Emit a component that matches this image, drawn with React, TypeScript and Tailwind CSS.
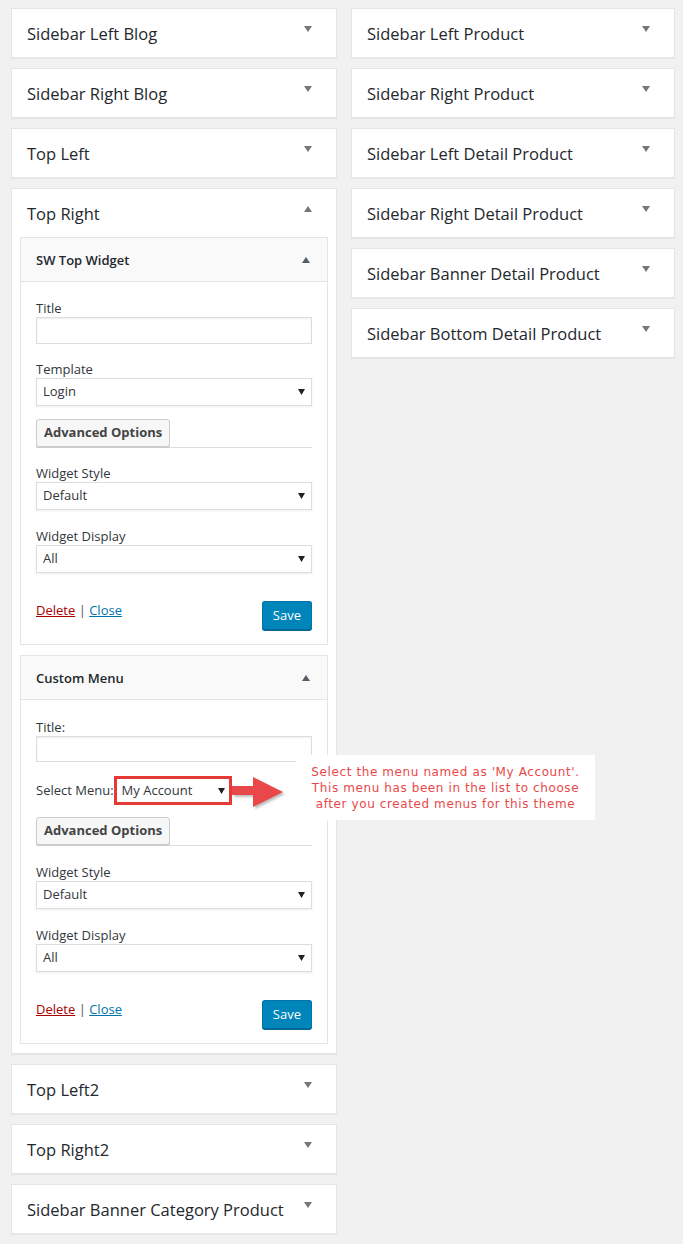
import React from 'react';

const Caret = ({ up = false, className = '' }: { up?: boolean; className?: string }) => (
  <svg width="8" height="6" viewBox="0 0 8 6" className={className}>
    {up ? <polygon points="0,6 8,6 4,0" fill="currentColor" /> : <polygon points="0,0 8,0 4,6" fill="currentColor" />}
  </svg>
);

const SelectArrow = () => (
  <svg width="7" height="6" viewBox="0 0 7 6">
    <polygon points="0,0 7,0 3.5,6" fill="#222" />
  </svg>
);

const SidebarBox = ({ title }: { title: string }) => (
  <div className="bg-white border border-[#e5e5e5] shadow-[0_1px_1px_rgba(0,0,0,0.04)]">
    <div className="h-[48px] flex items-center justify-between pl-[15px] pr-[24px]">
      <span className="pt-[2px] text-[16.5px] font-medium text-[#23282d]">{title}</span>
      <Caret className="text-[#72777c] mb-[8px]" />
    </div>
  </div>
);

const FakeSelect = ({ value }: { value: string }) => (
  <div className="h-[28px] flex items-center justify-between bg-white border border-[#ddd] shadow-[0_1px_2px_rgba(0,0,0,0.07)] pl-[6px] pr-[6px]">
    <span className="text-[13px] text-[#32373c]">{value}</span>
    <SelectArrow />
  </div>
);

const TextInput = ({ h }: { h: string }) => (
  <div className={`${h} bg-white border border-[#ddd] shadow-[inset_0_1px_2px_rgba(0,0,0,0.07)]`} />
);

const Label = ({ children }: { children: React.ReactNode }) => (
  <div className="text-[13px] leading-[18px] text-[#32373c]">{children}</div>
);

const AdvancedOptions = () => (
  <div className="border-b border-[#ddd] flex">
    <button className="h-[28px] px-[7px] bg-[#f7f7f7] border border-[#ccc] rounded-[3px] shadow-[0_1px_0_#ccc] text-[13px] font-bold text-[#444]">
      Advanced Options
    </button>
  </div>
);

const WidgetFooter = () => (
  <div className="flex justify-between items-start">
    <div className="text-[13px] leading-[18px] text-[#555]">
      <a className="text-[#a00] underline">Delete</a> | <a className="text-[#0073aa] underline">Close</a>
    </div>
    <button className="h-[29px] px-[10px] bg-[#0085ba] border border-[#0073aa] border-b-[#006799] rounded-[3px] shadow-[0_1px_0_#006799] text-[13px] text-white">
      Save
    </button>
  </div>
);

const WidgetHeader = ({ title }: { title: string }) => (
  <div className="h-[44px] flex items-center justify-between pl-[15px] pr-[17px] bg-[#f9f9f9] border-b border-[#e5e5e5]">
    <span className="pt-[2px] text-[13px] font-semibold text-[#23282d]">{title}</span>
    <Caret up className="text-[#555d66]" />
  </div>
);

const TopWidget = () => (
  <div className="bg-white border border-[#e5e5e5]">
    <WidgetHeader title="SW Top Widget" />
    <div className="px-[15px] pt-[17px] pb-[14px]">
      <Label>Title</Label>
      <TextInput h="h-[27px]" />
      <div className="mt-[16px]">
        <Label>Template</Label>
        <FakeSelect value="Login" />
      </div>
      <div className="mt-[13px]">
        <AdvancedOptions />
      </div>
      <div className="mt-[16px]">
        <Label>Widget Style</Label>
        <FakeSelect value="Default" />
      </div>
      <div className="mt-[17px]">
        <Label>Widget Display</Label>
        <FakeSelect value="All" />
      </div>
      <div className="mt-[28px]">
        <WidgetFooter />
      </div>
    </div>
  </div>
);

const CustomMenuWidget = () => (
  <div className="bg-white border border-[#e5e5e5]">
    <WidgetHeader title="Custom Menu" />
    <div className="px-[15px] pt-[18px] pb-[14px]">
      <Label>Title:</Label>
      <TextInput h="h-[26px]" />
      <div className="mt-[14px] flex items-center">
        <span className="text-[13px] text-[#32373c]">Select Menu:</span>
        <div className="w-[118px] h-[29px] border-[3px] border-[#e53935] bg-white flex items-center justify-between pl-[5px] pr-[4px]">
          <span className="text-[13px] text-[#32373c]">My Account</span>
          <SelectArrow />
        </div>
      </div>
      <div className="mt-[12px]">
        <AdvancedOptions />
      </div>
      <div className="mt-[17px]">
        <Label>Widget Style</Label>
        <FakeSelect value="Default" />
      </div>
      <div className="mt-[17px]">
        <Label>Widget Display</Label>
        <FakeSelect value="All" />
      </div>
      <div className="mt-[28px]">
        <WidgetFooter />
      </div>
    </div>
  </div>
);

export default function App() {
  return (
    <div className="relative min-h-screen bg-[#f1f1f1] font-['Open_Sans',sans-serif] flex gap-[14px] pl-[11px] pt-[8px] pb-[10px]">
      <div className="w-[326px] flex flex-col gap-[10px]">
        <SidebarBox title="Sidebar Left Blog" />
        <SidebarBox title="Sidebar Right Blog" />
        <SidebarBox title="Top Left" />
        <div className="bg-white border border-[#e5e5e5] shadow-[0_1px_1px_rgba(0,0,0,0.04)]">
          <div className="h-[48px] flex items-center justify-between pl-[15px] pr-[24px]">
            <span className="pt-[2px] text-[16.5px] font-medium text-[#23282d]">Top Right</span>
            <Caret up className="text-[#72777c] mb-[8px]" />
          </div>
          <div className="px-[8px] pb-[9px] flex flex-col gap-[10px]">
            <TopWidget />
            <CustomMenuWidget />
          </div>
        </div>
        <SidebarBox title="Top Left2" />
        <SidebarBox title="Top Right2" />
        <SidebarBox title="Sidebar Banner Category Product" />
      </div>
      <div className="w-[324px] flex flex-col gap-[10px]">
        <SidebarBox title="Sidebar Left Product" />
        <SidebarBox title="Sidebar Right Product" />
        <SidebarBox title="Sidebar Left Detail Product" />
        <SidebarBox title="Sidebar Right Detail Product" />
        <SidebarBox title="Sidebar Banner Detail Product" />
        <SidebarBox title="Sidebar Bottom Detail Product" />
      </div>

      {/* annotation arrow + callout */}
      <svg
        className="absolute left-[231px] top-[775px] drop-shadow-[2px_2px_1px_rgba(0,0,0,0.25)]"
        width="54"
        height="34"
        viewBox="0 0 54 34"
      >
        <path d="M1 11 H22 V2 L52 17 L22 32 V20 H1 Z" fill="#e8484a" />
      </svg>
      <div className="absolute left-[296px] top-[755px] w-[299px] h-[65px] bg-white flex flex-col items-center justify-center font-[DejaVu_Sans,Verdana,sans-serif] text-[12px] leading-[16px] tracking-[0.6px] text-[#e8484a] text-center">
        <div>Select the menu named as 'My Account'.</div>
        <div>This menu has been in the list to choose</div>
        <div>after you created menus for this theme</div>
      </div>
    </div>
  );
}
